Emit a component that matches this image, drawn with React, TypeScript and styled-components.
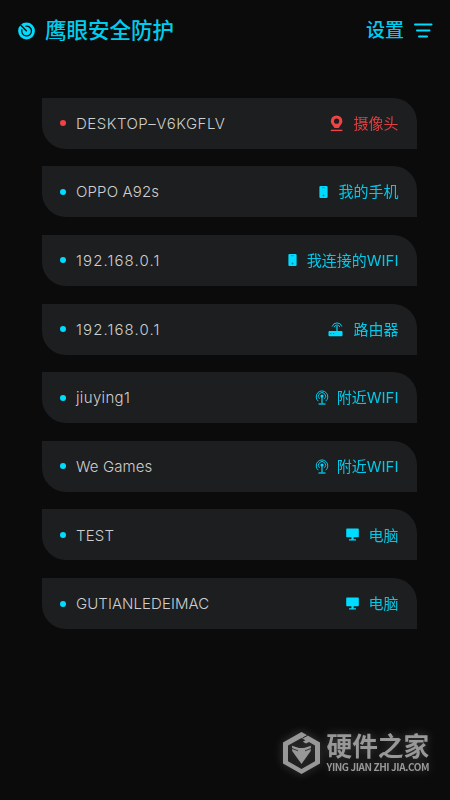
import React from 'react';
import styled, { createGlobalStyle } from 'styled-components';

const CYAN = '#00dcff';
const RED = '#f14344';

const GlobalStyle = createGlobalStyle`
  * { box-sizing: border-box; }
  body { margin: 0; background: #0b0b0b; }
`;

const Screen = styled.main`
  display: flex;
  flex-direction: column;
  width: 450px;
  height: 800px;
  overflow: hidden;
  background: #0b0b0b;
  color: ${CYAN};
  font-family: Inter, 'Noto Sans CJK SC', sans-serif;
`;

const Header = styled.header`
  display: flex;
  align-items: center;
  justify-content: space-between;
  height: 61px;
  padding: 0 17px 0 18px;
`;

const Brand = styled.div`
  display: flex;
  align-items: center;
  gap: 9px;
`;

const Title = styled.h1`
  margin: 0;
  padding-bottom: 1px;
  color: #00cdee;
  font-size: 21.5px;
  line-height: 29px;
  font-weight: 500;
  white-space: nowrap;
`;

const Settings = styled.div`
  display: flex;
  align-items: center;
  gap: 10px;
  color: #00cdee;
  font-size: 19px;
  line-height: 30px;
  font-weight: 500;
`;

const DeviceList = styled.ul`
  display: flex;
  flex-direction: column;
  gap: 17.65px;
  margin: 0;
  padding: 36.6px 33px 0 42px;
  list-style: none;
`;

const DeviceRow = styled.li`
  display: flex;
  align-items: center;
  height: 51px;
  padding: 0 18px;
  background: #1d1e20;
  border-radius: 0 24px 0 24px;
`;

const Dot = styled.span<{ $color: string }>`
  width: 6px;
  height: 6px;
  margin-right: 10px;
  border-radius: 50%;
  background: ${(p) => p.$color};
`;

const Name = styled.span<{ $spacing: number }>`
  flex: 1;
  padding-top: 1.4px;
  color: #cececf;
  font-size: 15px;
  font-weight: 300;
  line-height: 22px;
  letter-spacing: ${(p) => p.$spacing}px;
  white-space: nowrap;
`;

const Kind = styled.span<{ $color: string; $gap: number }>`
  display: flex;
  align-items: center;
  gap: ${(p) => p.$gap}px;
  color: ${(p) => p.$color};
  font-size: 15px;
  line-height: 22px;
  white-space: nowrap;
`;

const KindLabel = styled.span`
  padding-top: 1.4px;
  margin-right: 0.5px;
  opacity: 0.9;
`;

const Icon = styled.svg`
  display: block;
  flex: none;
`;

const Watermark = styled.footer`
  display: flex;
  align-items: center;
  gap: 6.5px;
  margin: auto 0 26.5px 283px;
  color: #989898;
  filter: drop-shadow(0 0 5px rgba(255, 255, 255, 0.22));
`;

const WatermarkText = styled.div`
  display: flex;
  flex-direction: column;
`;

const WatermarkName = styled.span`
  font-size: 25.7px;
  line-height: 28px;
  font-weight: 700;
  white-space: nowrap;
`;

const WatermarkUrl = styled.span`
  font-family: 'Noto Sans CJK SC', sans-serif;
  font-size: 10px;
  line-height: 12px;
  font-weight: 700;
  letter-spacing: -0.42px;
  white-space: nowrap;
`;

const LogoIcon = () => (
  <Icon width="18" height="18" viewBox="0 0 18 18" fill="none">
    <circle cx="8.5" cy="9" r="8.4" fill={CYAN} />
    <path d="M2.6 3 8.8 9.3" stroke="#0b0b0b" strokeWidth="1.5" />
    <path d="M7.4 4.3a4.9 4.9 0 1 1-3.4 3" stroke="#0b0b0b" strokeWidth="1.3" />
  </Icon>
);

const MenuIcon = () => (
  <Icon width="19" height="15" viewBox="0 0 19 15" stroke={CYAN} strokeWidth="2" strokeLinecap="round">
    <path d="M1 1.5H17.5M3 7.5H15.5M5 13.5H13" />
  </Icon>
);

type IconKind = 'camera' | 'phone' | 'router' | 'wifi' | 'computer';

const DeviceIcon = ({ kind }: { kind: IconKind }) => {
  switch (kind) {
    case 'camera':
      return (
        <Icon width="14" height="17" viewBox="0 0 14 17" fill="none">
          <circle cx="6.6" cy="6.2" r="4.2" stroke={RED} strokeWidth="3.2" />
          <path d="M2.8 10.4h7.6l-1.7 2.6H4.5z" fill={RED} />
          <path d="M.8 15.4h11.6" stroke={RED} strokeWidth="1.4" />
        </Icon>
      );
    case 'phone':
      return (
        <Icon width="9" height="12" viewBox="0 0 9 12">
          <rect x=".4" width="8.2" height="12" rx="1.1" fill={CYAN} />
          <path d="M3 1.7h3" stroke="#147e90" strokeWidth=".8" />
          <circle cx="4.5" cy="9.5" r=".9" fill="#147e90" />
        </Icon>
      );
    case 'router':
      return (
        <Icon width="15" height="15" viewBox="0 0 15 15" fill="none" stroke={CYAN}>
          <rect x=".5" y="8.9" width="14" height="5.4" rx="1" fill={CYAN} stroke="none" />
          <path d="M9 9V4" strokeWidth="1.2" />
          <path d="M4.1 4.6a5.1 5.1 0 0 1 9.8 0M6.2 5.1a2.9 2.9 0 0 1 5.6 0" strokeWidth=".9" />
          <path d="M2.2 11.6h1.2M5 11.6h1.2" stroke="#146575" />
        </Icon>
      );
    case 'wifi':
      return (
        <Icon width="14" height="15" viewBox="0 0 14 15" fill="none" stroke={CYAN}>
          <path d="M3.3 11.2a5.8 5.8 0 1 1 7.4 0M4.5 8.8a3.6 3.6 0 1 1 5 0" strokeWidth=".9" />
          <circle cx="7" cy="6" r="1.6" fill={CYAN} stroke="none" />
          <path d="M7 6v7.6" strokeWidth="1.2" />
          <path d="M3.5 14h7" strokeWidth="1.2" />
        </Icon>
      );
    case 'computer':
      return (
        <Icon width="13" height="13" viewBox="0 0 13 13" fill={CYAN}>
          <path d="M1 .6h11a.8.8 0 0 1 .8.8v7.1a.8.8 0 0 1-.8.8H7.6v2H10v1.2H3v-1.2h2.4v-2H1a.8.8 0 0 1-.8-.8V1.4A.8.8 0 0 1 1 .6Z" />
        </Icon>
      );
  }
};

const HexLogo = () => (
  <Icon width="37" height="42" viewBox="0 0 37 42" fill="currentColor">
    <path
      fillRule="evenodd"
      d="M18.5 0 37 10.5v21L18.5 42 0 31.5v-21ZM18.5 6 5 13.4v15.8L18.5 37 32 29.2V13.4l-6-3.5-3 1.7-3.2-1.8 2.6-1.6Z"
    />
    <path d="m9 13.7 7 2.3h5l7-2.3-.3 5.3-9.2 13L9.2 19Z" />
    <path d="m9 16.5 6 2.3M28 16.5l-6 2.3" stroke="#0b0b0b" strokeWidth=".7" />
    <path d="m19.5 6.2 5.2-3" stroke="#0b0b0b" strokeWidth=".9" />
  </Icon>
);

interface Device {
  name: string;
  spacing: number;
  kind: IconKind;
  label: string;
  gap: number;
}

const devices: Device[] = [
  { name: 'DESKTOP–V6KGFLV', spacing: 0.5, kind: 'camera', label: '摄像头', gap: 9.5 },
  { name: 'OPPO A92s', spacing: 0.15, kind: 'phone', label: '我的手机', gap: 10 },
  { name: '192.168.0.1', spacing: 1.1, kind: 'phone', label: '我连接的WIFI', gap: 9.5 },
  { name: '192.168.0.1', spacing: 1.1, kind: 'router', label: '路由器', gap: 10 },
  { name: 'jiuying1', spacing: 0.35, kind: 'wifi', label: '附近WIFI', gap: 8 },
  { name: 'We Games', spacing: 0.1, kind: 'wifi', label: '附近WIFI', gap: 8 },
  { name: 'TEST', spacing: 0.15, kind: 'computer', label: '电脑', gap: 9 },
  { name: 'GUTIANLEDEIMAC', spacing: 0.07, kind: 'computer', label: '电脑', gap: 9 },
];

export default function App() {
  return (
    <Screen>
      <GlobalStyle />
      <Header>
        <Brand>
          <LogoIcon />
          <Title>鹰眼安全防护</Title>
        </Brand>
        <Settings>
          设置
          <MenuIcon />
        </Settings>
      </Header>
      <DeviceList>
        {devices.map((device, index) => {
          const color = device.kind === 'camera' ? RED : CYAN;
          return (
            <DeviceRow key={index}>
              <Dot $color={color} />
              <Name $spacing={device.spacing}>{device.name}</Name>
              <Kind $color={color} $gap={device.gap}>
                <DeviceIcon kind={device.kind} />
                <KindLabel>{device.label}</KindLabel>
              </Kind>
            </DeviceRow>
          );
        })}
      </DeviceList>
      <Watermark>
        <HexLogo />
        <WatermarkText>
          <WatermarkName>硬件之家</WatermarkName>
          <WatermarkUrl>YING JIAN ZHI JIA.COM</WatermarkUrl>
        </WatermarkText>
      </Watermark>
    </Screen>
  );
}
